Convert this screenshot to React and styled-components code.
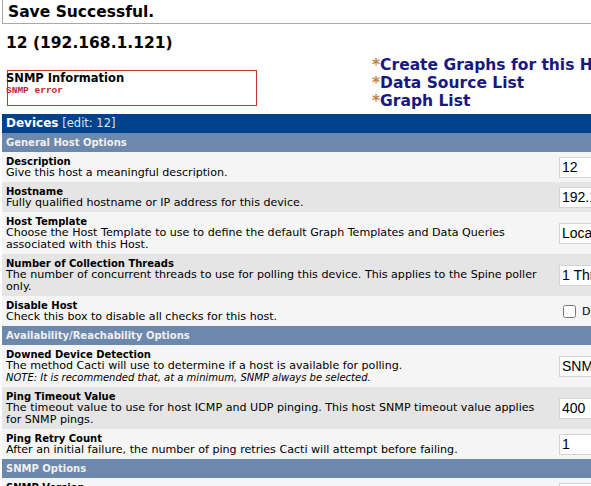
import React from "react";
import styled, { createGlobalStyle } from "styled-components";

const GlobalStyle = createGlobalStyle`
  html, body {
    margin: 0;
    padding: 0;
    background: #fff;
    overflow: hidden;
  }
  body {
    font-family: "DejaVu Sans", Verdana, sans-serif;
    color: #000;
  }
`;

const rows = [
  { type: "header", title: "General Host Options" },
  { label: "Description", desc: ["Give this host a meaningful description."], field: { kind: "text", value: "12" } },
  { label: "Hostname", desc: ["Fully qualified hostname or IP address for this device."], field: { kind: "text", value: "192.168.1.121" } },
  {
    label: "Host Template",
    desc: ["Choose the Host Template to use to define the default Graph Templates and Data Queries", "associated with this Host."],
    field: { kind: "select", value: "Local Linux Machine" },
  },
  {
    label: "Number of Collection Threads",
    desc: ["The number of concurrent threads to use for polling this device. This applies to the Spine poller", "only."],
    field: { kind: "select", value: "1 Thread (default)" },
  },
  { label: "Disable Host", desc: ["Check this box to disable all checks for this host."], field: { kind: "check", value: "Disable Host" } },
  { type: "header", title: "Availability/Reachability Options" },
  {
    label: "Downed Device Detection",
    desc: ["The method Cacti will use to determine if a host is available for polling."],
    note: "NOTE: It is recommended that, at a minimum, SNMP always be selected.",
    field: { kind: "select", value: "SNMP Uptime" },
  },
  {
    label: "Ping Timeout Value",
    desc: ["The timeout value to use for host ICMP and UDP pinging. This host SNMP timeout value applies", "for SNMP pings."],
    field: { kind: "text", value: "400" },
  },
  { label: "Ping Retry Count", desc: ["After an initial failure, the number of ping retries Cacti will attempt before failing."], field: { kind: "text", value: "1" } },
  { type: "header", title: "SNMP Options" },
  { label: "SNMP Version", desc: ["Choose the SNMP version for this device."], field: { kind: "select", value: "Version 1" } },
];

const links = ["Create Graphs for this Host", "Data Source List", "Graph List"];

const Field = ({ field }) => {
  if (field.kind === "check") {
    return (
      <CheckLabel>
        <Check type="checkbox" readOnly />
        {field.value}
      </CheckLabel>
    );
  }
  if (field.kind === "select") {
    return (
      <Select defaultValue={field.value}>
        <option>{field.value}</option>
      </Select>
    );
  }
  return <TextInput type="text" defaultValue={field.value} />;
};

const App = () => {
  let stripe = 0;
  return (
    <Page>
      <GlobalStyle />
      <Notice>Save Successful.</Notice>
      <Top>
        <TopLeft>
          <HostTitle>12 (192.168.1.121)</HostTitle>
          <InfoBox>
            <InfoTitle>SNMP Information</InfoTitle>
            <InfoError>SNMP error</InfoError>
          </InfoBox>
        </TopLeft>
        <Links>
          {links.map((l) => (
            <LinkLine key={l}>
              <Star>*</Star>
              <Link href="#">{l}</Link>
            </LinkLine>
          ))}
        </Links>
      </Top>
      <Table>
        <MainHeader>
          <b>Devices</b> <span>[edit: 12]</span>
        </MainHeader>
        {rows.map((r, i) => {
          if (r.type === "header") {
            stripe = 0;
            return <SectionHeader key={i}>{r.title}</SectionHeader>;
          }
          stripe += 1;
          return (
            <Row key={i} $alt={stripe % 2 === 0}>
              <LabelCell>
                <Label>{r.label}</Label>
                {r.desc.map((d) => (
                  <Desc key={d}>{d}</Desc>
                ))}
                {r.note && <Note>{r.note}</Note>}
              </LabelCell>
              <FieldCell>
                <Field field={r.field} />
              </FieldCell>
            </Row>
          );
        })}
      </Table>
    </Page>
  );
};

const Page = styled.div`
  width: 760px;
  padding-left: 2px;
`;

const Notice = styled.div`
  border: 1px solid #a9a9a9;
  border-top: none;
  height: 24px;
  box-sizing: border-box;
  padding: 3px 0 0 5px;
  font-size: 15.5px;
  font-weight: bold;
  line-height: 19px;
`;

const Top = styled.div`
  display: flex;
  height: 90px;
`;

const TopLeft = styled.div`
  width: 366px;
  padding-left: 4px;
  padding-top: 10px;
`;

const HostTitle = styled.div`
  font-size: 15.5px;
  font-weight: bold;
  line-height: 19px;
`;

const InfoBox = styled.div`
  margin-top: 17px;
  margin-left: 1px;
  width: 248px;
  height: 34px;
  border: 1px solid #c0392b;
`;

const InfoTitle = styled.div`
  margin-left: -2px;
  font-size: 11.5px;
  font-weight: bold;
  line-height: 13px;
  padding-top: 1px;
`;

const InfoError = styled.div`
  margin-left: -2px;
  font-family: "Liberation Mono", "Courier New", monospace;
  font-size: 9.5px;
  font-weight: bold;
  color: #c62828;
  line-height: 11px;
`;

const Links = styled.div`
  padding-top: 32px;
  white-space: nowrap;
`;

const LinkLine = styled.div`
  font-size: 15.5px;
  font-weight: bold;
  line-height: 18px;
`;

const Star = styled.span`
  color: #bf8540;
`;

const Link = styled.a`
  color: #18187f;
  text-decoration: none;
`;

const Table = styled.div`
  display: flex;
  flex-direction: column;
`;

const MainHeader = styled.div`
  background: #00438c;
  height: 19px;
  padding-left: 4px;
  line-height: 19px;
  color: #fff;
  font-size: 12px;

  b {
    font-weight: bold;
  }
  span {
    font-size: 11.5px;
    color: #dde6f0;
  }
`;

const SectionHeader = styled.div`
  background: #6d88ad;
  height: 19px;
  padding-left: 4px;
  line-height: 19px;
  color: #f0f0f0;
  font-size: 10px;
  font-weight: bold;
`;

const Row = styled.div`
  display: grid;
  grid-template-columns: 557px 1fr;
  align-items: center;
  background: ${(p) => (p.$alt ? "#e5e5e5" : "#f5f5f5")};
`;

const LabelCell = styled.div`
  padding: 4px 0 3px 4px;
  white-space: nowrap;
`;

const Label = styled.div`
  font-size: 10px;
  font-weight: bold;
  line-height: 11px;
`;

const Desc = styled.div`
  font-size: 11.1px;
  line-height: 12px;
`;

const Note = styled.div`
  font-size: 10px;
  font-style: italic;
  line-height: 12px;
`;

const FieldCell = styled.div`
  display: flex;
  align-items: center;
`;

const TextInput = styled.input`
  width: 180px;
  height: 21px;
  box-sizing: border-box;
  border: 1px solid #d4d4d4;
  background: #fff;
  font-family: "Liberation Sans", Arial, sans-serif;
  font-size: 14px;
  padding: 0 2px;
  margin: 0;
  outline: none;
`;

const Select = styled.select`
  appearance: none;
  width: 180px;
  height: 21px;
  box-sizing: border-box;
  border: 1px solid #d4d4d4;
  border-radius: 0;
  background: #fff;
  font-family: "Liberation Sans", Arial, sans-serif;
  font-size: 14px;
  padding: 0 2px;
  margin: 0;
  color: #000;
`;

const CheckLabel = styled.label`
  display: flex;
  align-items: center;
  gap: 6px;
  padding-left: 4px;
  font-size: 11px;
`;

const Check = styled.input`
  width: 13px;
  height: 13px;
  margin: 0;
`;

export default App;
